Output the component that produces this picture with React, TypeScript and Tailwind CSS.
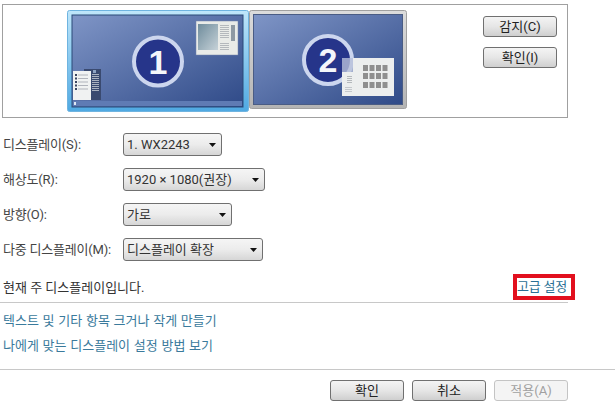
import React from 'react';

const FONT = "font-['Roboto','Noto_Sans_CJK_KR',sans-serif]";

const rows = [
  { label: '디스플레이(S):', value: '1. WX2243', width: 'w-[99px]' },
  { label: '해상도(R):', value: '1920 × 1080(권장)', width: 'w-[142px]' },
  { label: '방향(O):', value: '가로', width: 'w-[109px]' },
  { label: '다중 디스플레이(M):', value: '디스플레이 확장', width: 'w-[140px]' },
];

const Button: React.FC<{ text: string; disabled?: boolean }> = ({ text, disabled }) => (
  <div
    className={`w-[74px] h-[21px] rounded-[3px] border flex items-center justify-center text-[13px] ${
      disabled
        ? 'border-[#c4c4c4] bg-[#f4f4f4] text-[#a0a0a0]'
        : 'border-[#707070] bg-gradient-to-b from-[#f4f4f4] via-[#e6e6e6] to-[#cfcfcf] text-[#222]'
    }`}
  >
    {text}
  </div>
);

const Select: React.FC<{ value: string; width: string }> = ({ value, width }) => (
  <div
    className={`${width} h-[23px] rounded-[3px] border border-[#707070] bg-gradient-to-b from-[#f5f5f5] via-[#ececec] to-[#d6d6d6] flex items-center justify-between pl-[3px] pr-[5px] text-[13px] text-[#333]`}
  >
    <span>{value}</span>
    <svg width="7" height="4" viewBox="0 0 7 4">
      <path d="M0 0h7L3.5 4z" fill="#111" />
    </svg>
  </div>
);

const MonitorOne = () => (
  <svg width="182" height="102" viewBox="0 0 182 102" className="block">
    <defs>
      <linearGradient id="m1" x1="0" y1="0" x2="1" y2="1">
        <stop offset="0" stopColor="#7f95c6" />
        <stop offset="1" stopColor="#2f4a88" />
      </linearGradient>
      <linearGradient id="f1" x1="0" y1="0" x2="0" y2="1">
        <stop offset="0" stopColor="#bfe6fa" />
        <stop offset="1" stopColor="#4fa9e2" />
      </linearGradient>
      <linearGradient id="s1" x1="0" y1="0" x2="1" y2="1">
        <stop offset="0" stopColor="#6f8c9c" />
        <stop offset="1" stopColor="#c6d2d8" />
      </linearGradient>
    </defs>
    <rect x="0.5" y="0.5" width="181" height="101" rx="2" fill="url(#f1)" stroke="#6fb4e0" />
    <rect x="5" y="5" width="171" height="92" fill="url(#m1)" stroke="#2a4a78" />
    <rect x="6" y="91" width="169" height="5" fill="#5f7bb4" />
    <rect x="7" y="92" width="2" height="3" fill="#dfe8f4" />
    {/* window top right */}
    <rect x="129" y="11" width="42" height="34" fill="#e9ebe8" stroke="#7585ab" strokeWidth="0.5" />
    <rect x="131" y="14" width="20" height="26" fill="url(#s1)" />
    {[15, 17, 19, 21, 23, 25, 27, 33, 35, 37, 39].map((y) => (
      <rect key={y} x="153" y={y} width="9" height="1" fill="#b4b8bc" />
    ))}
    <rect x="164" y="15" width="4" height="16" fill="#8e99a3" />
    {/* window bottom left */}
    <rect x="17" y="59" width="17" height="31" fill="#3a4a70" />
    <rect x="6" y="61" width="18" height="29" fill="#f0f2f2" />
    {[64, 67.5, 71, 74.5, 78].map((y) => (
      <g key={y}>
        <rect x="8" y={y} width="2" height="2" fill="#3a4560" />
        <rect x="11" y={y + 0.5} width="10" height="1" fill="#b0b4bc" />
      </g>
    ))}
    {[64, 66, 68, 70, 72, 74, 76, 78, 80].map((y) => (
      <rect key={y} x="25" y={y} width="7" height="1" fill="#aab2c0" />
    ))}
    <rect x="26" y="60" width="3" height="3" fill="#8ea4c4" />
    {/* number */}
    <circle cx="91" cy="51.5" r="24" fill="#26358a" stroke="#ccd6ee" strokeWidth="4" />
    <text x="91" y="63.5" textAnchor="middle" fontFamily="'Liberation Sans',sans-serif" fontWeight="700" fontSize="34" fill="#f4f6fb">
      1
    </text>
  </svg>
);

const MonitorTwo = () => (
  <svg width="158" height="99" viewBox="0 0 158 99" className="block">
    <defs>
      <linearGradient id="m2" x1="0" y1="0" x2="1" y2="1">
        <stop offset="0" stopColor="#7f95c6" />
        <stop offset="1" stopColor="#2f4a88" />
      </linearGradient>
      <linearGradient id="f2" x1="0" y1="0" x2="0" y2="1">
        <stop offset="0" stopColor="#dcdcdc" />
        <stop offset="1" stopColor="#b4b4b4" />
      </linearGradient>
    </defs>
    <rect x="0.5" y="0.5" width="157" height="98" rx="2" fill="url(#f2)" stroke="#a0a0a0" />
    <rect x="4.5" y="4.5" width="149" height="90" fill="url(#m2)" stroke="#4a5c84" />
    <circle cx="79" cy="50" r="24" fill="#26358a" stroke="#ccd6ee" strokeWidth="4" />
    <text x="79" y="62" textAnchor="middle" fontFamily="'Liberation Sans',sans-serif" fontWeight="700" fontSize="34" fill="#f4f6fb">
      2
    </text>
    {/* calendar window */}
    <rect x="104" y="48" width="41" height="38" fill="#eceeee" />
    <rect x="93" y="62" width="11" height="24" fill="#eceeee" />
    <rect x="93" y="48" width="11" height="14" fill="#b8c0da" opacity="0.8" />
    {[66, 68, 70, 72].map((y) => (
      <rect key={y} x="98" y={y} width="5" height="1" fill="#b4b8bc" />
    ))}
    {[77, 79, 81].map((y) => (
      <rect key={y} x="96" y={y} width="7" height="1" fill="#c4c8cc" />
    ))}
    {[55, 63, 72].map((y) =>
      [114, 120.5, 127, 133.5].map((x) => <rect key={`${x}-${y}`} x={x} y={y} width="5" height="6" fill="#8f8f8f" />),
    )}
  </svg>
);

const App: React.FC = () => {
  return (
    <div className={`w-[615px] h-[405px] bg-white overflow-hidden pt-[4px] ${FONT}`}>
      <div className="ml-[2px] w-[566px] h-[114px] border border-[#a0a0a0] flex pl-[64px] pt-[5px]">
        <MonitorOne />
        <MonitorTwo />
        <div className="ml-[76px] mt-[6px] flex flex-col gap-[10px]">
          <Button text="감지(C)" />
          <Button text="확인(I)" />
        </div>
      </div>

      <div className="mt-[15px] pl-[3px] flex flex-col gap-[12px]">
        {rows.map((r) => (
          <div key={r.label} className="flex items-center h-[23px]">
            <span className="w-[120px] pt-[1px] text-[13px] tracking-[-0.2px] text-[#444]">{r.label}</span>
            <Select value={r.value} width={r.width} />
          </div>
        ))}
      </div>

      <div className="mt-[13px] pl-[3px] w-[575px] h-[26px] flex items-center justify-between">
        <span className="pt-[1px] text-[13px] text-[#333]">현재 주 디스플레이입니다.</span>
        <span className="w-[62px] h-[26px] border-[4px] border-[#e2101e] flex items-center text-[13px] tracking-[-0.2px] text-[#2a7095] whitespace-nowrap">
          고급 설정
        </span>
      </div>

      <div className="mt-[2px] w-[568px] h-[1px] bg-[#c8c8c8]" />

      <div className="pl-[3px] pt-[9px] flex flex-col gap-[7px] text-[13px] text-[#3a7a9c] [word-spacing:0.5px]">
        <span className="h-[18px] leading-[18px]">텍스트 및 기타 항목 크거나 작게 만들기</span>
        <span className="h-[18px] leading-[18px]">나에게 맞는 디스플레이 설정 방법 보기</span>
      </div>

      <div className="mt-[14px] w-full h-[1px] bg-[#c8c8c8]" />

      <div className="mt-[10px] pl-[330px] flex gap-[8px]">
        <Button text="확인" />
        <Button text="취소" />
        <Button text="적용(A)" disabled />
      </div>
    </div>
  );
};

export default App;
